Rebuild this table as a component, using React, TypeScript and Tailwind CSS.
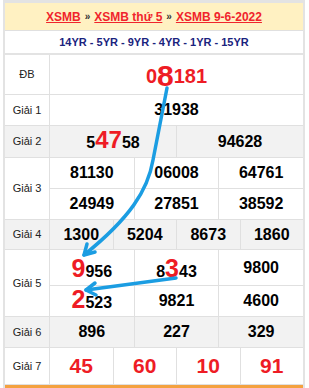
const font = { fontFamily: '"Liberation Sans", Arial, sans-serif' };

function Cell({ children, className = '' }: { children: React.ReactNode; className?: string }) {
  return (
    <div className={`flex items-center justify-center border-l border-[#e0e0e0] ${className}`}>
      {children}
    </div>
  );
}

function Row({
  label,
  gray,
  h,
  children,
}: {
  label: string;
  gray?: boolean;
  h: string;
  children: React.ReactNode;
}) {
  return (
    <div className={`flex border-b border-[#e0e0e0] ${gray ? 'bg-[#f2f2f2]' : 'bg-white'} ${h}`}>
      <div className="flex w-[44px] shrink-0 items-center justify-center text-[11px] font-normal text-[#222]">
        {label}
      </div>
      <div className="flex grow flex-col">{children}</div>
    </div>
  );
}

function Nums({ items, cols, className = '' }: { items: React.ReactNode[]; cols: string; className?: string }) {
  return (
    <div className={`grid grow ${cols} ${className}`}>
      {items.map((it, i) => (
        <Cell key={i}>{it}</Cell>
      ))}
    </div>
  );
}

export default function App() {
  return (
    <div className="relative h-[388px] w-[309px] bg-white" style={font}>
      <div className="ml-[3px] w-[302px] border-x-2 border-t-[3px] border-[#e3e3e3]">
        <div className="flex h-[28px] items-center justify-center border-b border-[#e0e0e0] bg-[#fff1c2] text-[12px] font-bold text-[#f0242c]">
          <a className="underline">XSMB</a>
          <span className="mx-[4px] text-[10px] text-[#333]">»</span>
          <a className="underline">XSMB thứ 5</a>
          <span className="mx-[4px] text-[10px] text-[#333]">»</span>
          <a className="underline">XSMB 9-6-2022</a>
        </div>
        <div className="flex h-[24px] items-center justify-center border-b-2 border-[#e3e3e3] text-[11px] font-bold text-[#1a237e]">
          14YR - 5YR - 9YR - 4YR - 1YR - 15YR
        </div>

        <div className="text-[16px] font-bold text-black">
          <Row label="ĐB" h="h-[40px]">
            <Cell className="grow pt-[2px] text-[20px] text-[#ee1c25]">
              0<span className="text-[30px] leading-none">8</span>181
            </Cell>
          </Row>
          <Row label="Giải 1" h="h-[31px]">
            <Cell className="grow">31938</Cell>
          </Row>
          <Row label="Giải 2" gray h="h-[32px]">
            <Nums
              cols="grid-cols-2"
              items={[
                <span>
                  5<span className="text-[24px] leading-none text-[#ee1c25]">47</span>58
                </span>,
                '94628',
              ]}
            />
          </Row>
          <Row label="Giải 3" h="h-[62px]">
            <Nums cols="grid-cols-3" className="border-b border-[#e0e0e0]" items={['81130', '06008', '64761']} />
            <Nums cols="grid-cols-3" items={['24949', '27851', '38592']} />
          </Row>
          <Row label="Giải 4" gray h="h-[30px]">
            <Nums cols="grid-cols-4" items={['1300', '5204', '8673', '1860']} />
          </Row>
          <Row label="Giải 5" h="h-[67px]">
            <Nums
              cols="grid-cols-3"
              className="h-[36px] grow-0 border-b border-[#e0e0e0]"
              items={[
                <span className="pt-[4px]">
                  <span className="text-[25px] leading-none text-[#ee1c25]">9</span>956
                </span>,
                <span className="pt-[4px]">
                  8<span className="text-[25px] leading-none text-[#ee1c25]">3</span>43
                </span>,
                '9800',
              ]}
            />
            <Nums
              cols="grid-cols-3"
              items={[
                <span>
                  <span className="text-[25px] leading-none text-[#ee1c25]">2</span>523
                </span>,
                '9821',
                '4600',
              ]}
            />
          </Row>
          <Row label="Giải 6" gray h="h-[31px]">
            <Nums cols="grid-cols-3" items={['896', '227', '329']} />
          </Row>
          <Row label="Giải 7" h="h-[37px]">
            <Nums
              cols="grid-cols-4"
              className="text-[21px] text-[#ee1c25]"
              items={['45', '60', '10', '91']}
            />
          </Row>
        </div>
        <div className="h-[3px] bg-[#f4a13f]" />
      </div>

      <svg className="pointer-events-none absolute left-0 top-0" width="309" height="388">
        <g stroke="#1b9de2" strokeWidth="3.5" fill="none" strokeLinecap="round" strokeLinejoin="round">
          <path d="M167 88 L153 160 C148 190 130 218 84 255" />
          <path d="M84 255 L87 244 M84 255 L95 252" />
          <path d="M176 278 L86 290" />
          <path d="M86 290 L95 283 M86 290 L96 295" />
        </g>
      </svg>
    </div>
  );
}
